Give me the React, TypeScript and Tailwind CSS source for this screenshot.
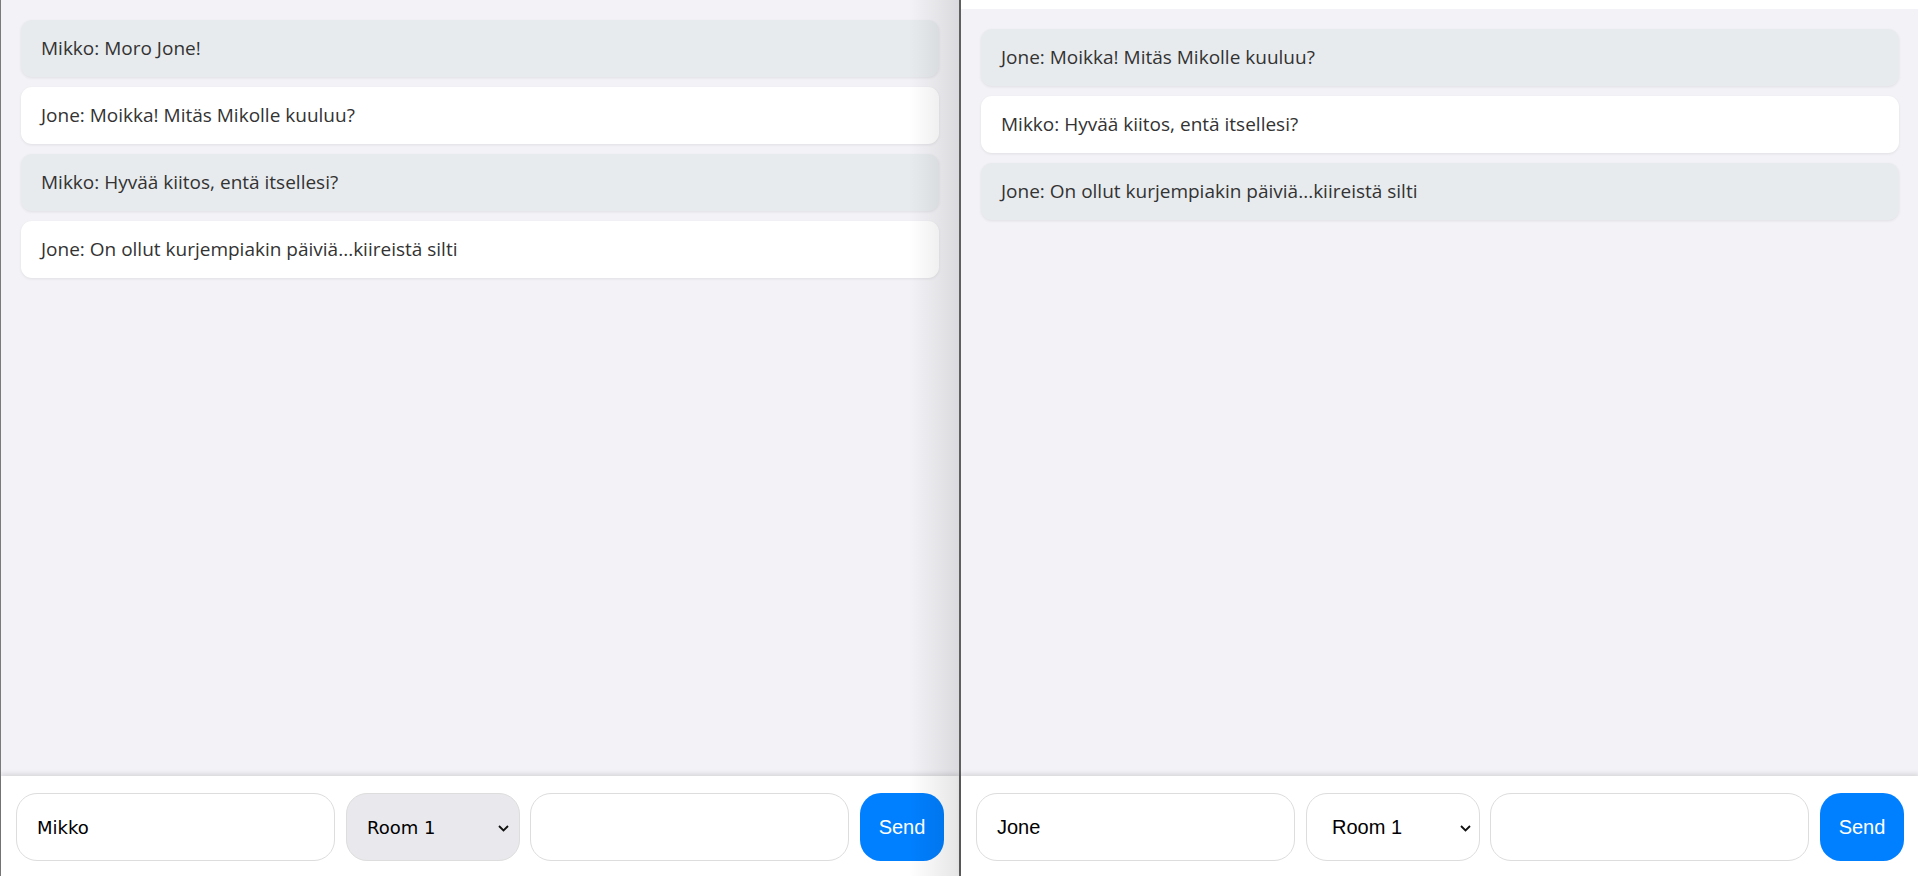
import React from "react";

type Msg = { text: string; gray: boolean };

const leftMsgs: Msg[] = [
  { text: "Mikko: Moro Jone!", gray: true },
  { text: "Jone: Moikka! Mitäs Mikolle kuuluu?", gray: false },
  { text: "Mikko: Hyvää kiitos, entä itsellesi?", gray: true },
  { text: "Jone: On ollut kurjempiakin päiviä...kiireistä silti", gray: false },
];

const rightMsgs: Msg[] = [
  { text: "Jone: Moikka! Mitäs Mikolle kuuluu?", gray: true },
  { text: "Mikko: Hyvää kiitos, entä itsellesi?", gray: false },
  { text: "Jone: On ollut kurjempiakin päiviä...kiireistä silti", gray: true },
];

function Bubble({ m }: { m: Msg }) {
  return (
    <div
      className={
        (m.gray ? "bg-[#e8ebee] " : "bg-white ") +
        "rounded-[11px] h-[57px] flex items-center px-[20px] text-[19px] text-[#333333] shadow-[0_1px_3px_rgba(0,0,0,0.08)] [font-family:'Open_Sans','Noto_Sans',sans-serif]"
      }
    >
      {m.text}
    </div>
  );
}

function Chevron({ left }: { left: boolean }) {
  return (
    <svg
      width="11"
      height="7"
      viewBox="0 0 11 7"
      className={(left ? "right-[10px] " : "right-[8px] ") + "absolute top-[31px] pointer-events-none"}
    >
      <path d="M1 1 L5.5 5.5 L10 1" fill="none" stroke="#111" strokeWidth="1.8" />
    </svg>
  );
}

function Bar({ name, left }: { name: string; left: boolean }) {
  const font = left
    ? "[font-family:'DejaVu_Sans',sans-serif] text-[18px]"
    : "[font-family:'Liberation_Sans',Arial,sans-serif] text-[20px]";
  return (
    <div className="h-[100px] bg-white shadow-[0_-2px_5px_rgba(0,0,0,0.12)] relative z-10 flex items-start px-[15px] pt-[17px]">
      <div
        className={
          "w-[319px] shrink-0 h-[68px] rounded-[21px] border border-[#dddddd] bg-white flex items-center pl-[20px] text-black " +
          font
        }
      >
        {name}
      </div>
      <div
        className={
          (left ? "bg-[#e9e9ed] pl-[20px] " : "bg-white pl-[25px] ") +
          "ml-[11px] shrink-0 relative w-[174px] h-[68px] rounded-[21px] border border-[#dddddd] flex items-center text-black " +
          font
        }
      >
        Room 1
        <Chevron left={left} />
      </div>
      <div className="ml-[10px] w-[319px] shrink-0 h-[68px] rounded-[21px] border border-[#dddddd] bg-white" />
      <div className="ml-[11px] w-[84px] shrink-0 h-[68px] rounded-[21px] bg-[#007fff] text-white flex items-center justify-center text-[20px] [font-family:'Liberation_Sans',Arial,sans-serif]">
        Send
      </div>
    </div>
  );
}

export default function App() {
  return (
    <div className="w-[1918px] h-[876px] flex overflow-hidden bg-white">
      <div className="relative w-[959px] shrink-0 h-full border-l border-[#7a7a7a] flex flex-col bg-[#f3f3f7]">
        <div className="flex-1 flex flex-col gap-[10px] px-[20px] pt-[20px]">
          {leftMsgs.map((m, i) => (
            <Bubble key={i} m={m} />
          ))}
        </div>
        <Bar name="Mikko" left={true} />
        <div className="absolute top-0 bottom-0 right-0 w-[50px] bg-gradient-to-r from-transparent to-black/10 pointer-events-none z-20" />
      </div>
      <div className="w-[2px] shrink-0 h-full bg-[#5f5f5f]" />
      <div className="flex-1 h-full flex flex-col bg-[#f3f3f7]">
        <div className="h-[9px] bg-white" />
        <div className="flex-1 flex flex-col gap-[10px] px-[20px] pt-[20px]">
          {rightMsgs.map((m, i) => (
            <Bubble key={i} m={m} />
          ))}
        </div>
        <Bar name="Jone" left={false} />
      </div>
    </div>
  );
}
